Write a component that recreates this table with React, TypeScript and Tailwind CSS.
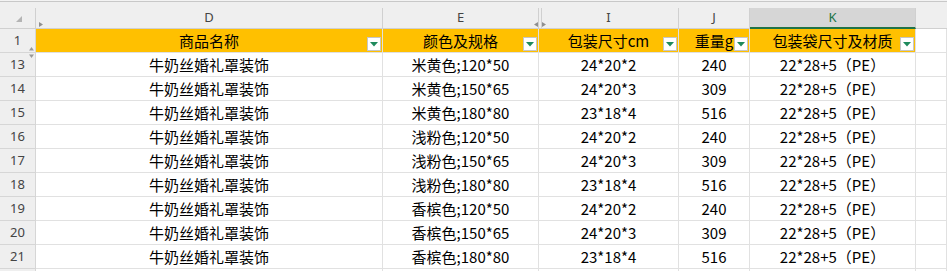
import React from "react";

const rows = [
  { n: 13, name: "牛奶丝婚礼罩装饰", spec: "米黄色;120*50", size: "24*20*2", w: "240", bag: "22*28+5（PE）" },
  { n: 14, name: "牛奶丝婚礼罩装饰", spec: "米黄色;150*65", size: "24*20*3", w: "309", bag: "22*28+5（PE）" },
  { n: 15, name: "牛奶丝婚礼罩装饰", spec: "米黄色;180*80", size: "23*18*4", w: "516", bag: "22*28+5（PE）" },
  { n: 16, name: "牛奶丝婚礼罩装饰", spec: "浅粉色;120*50", size: "24*20*2", w: "240", bag: "22*28+5（PE）" },
  { n: 17, name: "牛奶丝婚礼罩装饰", spec: "浅粉色;150*65", size: "24*20*3", w: "309", bag: "22*28+5（PE）" },
  { n: 18, name: "牛奶丝婚礼罩装饰", spec: "浅粉色;180*80", size: "23*18*4", w: "516", bag: "22*28+5（PE）" },
  { n: 19, name: "牛奶丝婚礼罩装饰", spec: "香槟色;120*50", size: "24*20*2", w: "240", bag: "22*28+5（PE）" },
  { n: 20, name: "牛奶丝婚礼罩装饰", spec: "香槟色;150*65", size: "24*20*3", w: "309", bag: "22*28+5（PE）" },
  { n: 21, name: "牛奶丝婚礼罩装饰", spec: "香槟色;180*80", size: "23*18*4", w: "516", bag: "22*28+5（PE）" },
];

const cols = "grid grid-cols-[36px_347px_156px_140px_71px_166px_1fr]";
const cellFont = "[font-family:'Noto_Sans_CJK_SC',sans-serif]";

function FilterButton() {
  return (
    <span className="absolute right-[1px] bottom-[1px] flex h-[14px] w-[14px] items-center justify-center border border-[#c6c6c6] bg-white">
      <svg width="8" height="5" viewBox="0 0 8 5">
        <polygon points="0,0 8,0 4,4.5" fill="#1f8a5c" />
      </svg>
    </span>
  );
}

function HeadCell({ label, filter = true }: { label: string; filter?: boolean }) {
  return (
    <div className="relative flex h-[24px] items-center justify-center border-r border-b border-[#e0e0e0] bg-[#ffc000] text-[15px] leading-none text-black">
      {label}
      {filter && <FilterButton />}
    </div>
  );
}

function Cell({ children }: { children?: React.ReactNode }) {
  return (
    <div className="flex h-[24px] items-center justify-center border-r border-b border-[#e1e1e1] text-[15px] leading-none text-black">
      {children}
    </div>
  );
}

function RowNum({ n }: { n?: number }) {
  return (
    <div className="flex h-[24px] items-center justify-center border-r border-b border-[#d6d6d6] bg-[#efefef] text-[13px] text-[#444] [font-family:'Noto_Sans',sans-serif]">
      {n}
    </div>
  );
}

export default function App() {
  const letter = "flex h-[21px] items-center justify-center border-r border-b border-[#d0d0d0] text-[13px] text-[#444] [font-family:'Noto_Sans',sans-serif]";
  return (
    <div className={`relative h-[271px] w-[947px] overflow-hidden bg-white ${cellFont}`}>
      <div className="h-[2px] border-b border-[#c8c8c8] bg-[#f3f3f3]" />
      <div className="h-[6px] bg-[#efefef]" />

      <div className={`${cols} bg-[#efefef]`}>
        <div className="h-[21px] border-r border-b border-[#d0d0d0]" />
        <div className={letter}>D</div>
        <div className={letter}>E</div>
        <div className={letter}>I</div>
        <div className={letter}>J</div>
        <div className="flex h-[21px] items-center justify-center border-r border-b-2 border-r-[#d0d0d0] border-b-[#217346] bg-[#d6d6d6] text-[13px] text-[#217346] [font-family:'Noto_Sans',sans-serif]">
          K
        </div>
        <div className="h-[21px] border-b border-[#d0d0d0]" />
      </div>

      <div className={cols}>
        <RowNum n={1} />
        <HeadCell label="商品名称" />
        <HeadCell label="颜色及规格" />
        <HeadCell label="包装尺寸cm" />
        <HeadCell label="重量g" />
        <HeadCell label="包装袋尺寸及材质" />
        <Cell />
      </div>

      {rows.map((r) => (
        <div key={r.n} className={cols}>
          <RowNum n={r.n} />
          <Cell>{r.name}</Cell>
          <Cell>{r.spec}</Cell>
          <Cell>{r.size}</Cell>
          <Cell>{r.w}</Cell>
          <Cell>{r.bag}</Cell>
          <Cell />
        </div>
      ))}

      {/* next row, only its top edge is on screen */}
      <div className={cols}>
        <RowNum />
        <Cell />
        <Cell />
        <Cell />
        <Cell />
        <Cell />
        <Cell />
      </div>

      {/* corner select-all triangle */}
      <svg className="absolute left-[16px] top-[16px]" width="6" height="6" viewBox="0 0 6 6">
        <polygon points="6,0 6,6 0,6" fill="#b4b4b4" />
      </svg>
      {/* hidden columns A-C marker */}
      <svg className="absolute left-[39px] top-[22px]" width="4" height="5" viewBox="0 0 4 5">
        <polygon points="0,0 4,2.5 0,5" fill="#8f8f8f" />
      </svg>
      {/* hidden rows 2-12 marker */}
      <svg className="absolute left-[29px] top-[47px]" width="5" height="11" viewBox="0 0 5 11">
        <polygon points="2.5,0 5,3.5 0,3.5" fill="#9a9a9a" />
        <polygon points="0,7.5 5,7.5 2.5,11" fill="#9a9a9a" />
      </svg>
      {/* hidden columns F-H marker */}
      <div className="absolute left-[541px] top-[8px] h-[20px] w-px bg-[#d0d0d0]" />
      <svg className="absolute left-[534px] top-[22px]" width="12" height="5" viewBox="0 0 12 5">
        <polygon points="4,0 4,5 0,2.5" fill="#8f8f8f" />
        <polygon points="8,0 12,2.5 8,5" fill="#8f8f8f" />
      </svg>
    </div>
  );
}
